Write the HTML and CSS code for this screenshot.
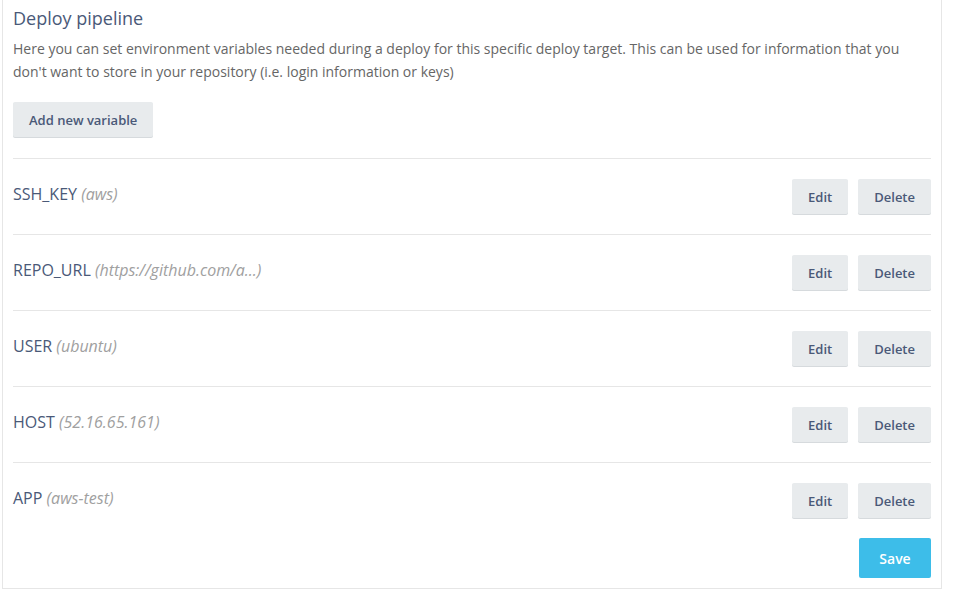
FILE: index.html
```html
<!DOCTYPE html>
<html lang="en">
<head>
  <meta charset="UTF-8" />
  <title>Deploy pipeline</title>
  <link rel="stylesheet" href="styles.css">
</head>
<body>

<div class="panel">
  <h2>Deploy pipeline</h2>
  <p class="intro">Here you can set environment variables needed during a deploy for this specific deploy target. This can be used for information that you don't want to store in your repository (i.e. login information or keys)</p>

  <button class="btn add-btn">Add new variable</button>

  <div class="var-list">
    <div class="var-row">
      <div class="var-name">SSH_KEY <em>(aws)</em></div>
      <div class="var-actions">
        <button class="btn">Edit</button>
        <button class="btn">Delete</button>
      </div>
    </div>
    <div class="var-row">
      <div class="var-name">REPO_URL <em>(https://github.com/a...)</em></div>
      <div class="var-actions">
        <button class="btn">Edit</button>
        <button class="btn">Delete</button>
      </div>
    </div>
    <div class="var-row">
      <div class="var-name">USER <em>(ubuntu)</em></div>
      <div class="var-actions">
        <button class="btn">Edit</button>
        <button class="btn">Delete</button>
      </div>
    </div>
    <div class="var-row">
      <div class="var-name">HOST <em>(52.16.65.161)</em></div>
      <div class="var-actions">
        <button class="btn">Edit</button>
        <button class="btn">Delete</button>
      </div>
    </div>
    <div class="var-row">
      <div class="var-name">APP <em>(aws-test)</em></div>
      <div class="var-actions">
        <button class="btn">Edit</button>
        <button class="btn">Delete</button>
      </div>
    </div>
  </div>

  <div class="footer">
    <button class="btn btn-primary">Save</button>
  </div>
</div>

</body>
</html>
```

FILE: styles.css
```css
* {
  box-sizing: border-box;
}

body {
  font-family: 'Open Sans', sans-serif;
  background: #ffffff;
  margin: 0;
  padding: 0;
}

.panel {
  width: 940px;
  margin-left: 2px;
  padding: 5px 10px 10px 10px;
  border: 1px solid #e6e6e6;
  border-top: none;
}

h2 {
  margin: 0;
  font-size: 18px;
  font-weight: 400;
  line-height: 26px;
  color: #4a5978;
}

.intro {
  margin: 6px 0 19px;
  font-size: 14px;
  line-height: 23px;
  color: #666666;
}

.btn {
  font-family: 'Open Sans', sans-serif;
  font-size: 13px;
  font-weight: 600;
  color: #4a5978;
  background-color: #e8ebed;
  border: none;
  border-radius: 2px;
  box-shadow: 0 1px 0 #d6dadd;
  height: 35px;
  padding: 0 16px;
  cursor: pointer;
}

.btn:hover {
  background-color: #dde1e4;
}

.add-btn {
  margin-bottom: 21px;
}

.var-row {
  display: flex;
  align-items: center;
  justify-content: space-between;
  padding: 20px 0;
  border-top: 1px solid #e6e6e6;
}

.var-name {
  padding-bottom: 5px;
  font-size: 16px;
  color: #4a5978;
}

.var-name em {
  color: #a0a0a0;
}

.var-actions {
  display: flex;
  gap: 10px;
}

.footer {
  display: flex;
  justify-content: flex-end;
}

.btn-primary {
  height: 40px;
  width: 72px;
  padding: 0;
  font-size: 14px;
  color: #ffffff;
  background-color: #3dbde9;
  box-shadow: none;
}

.btn-primary:hover {
  background-color: #2aaedb;
}
```
